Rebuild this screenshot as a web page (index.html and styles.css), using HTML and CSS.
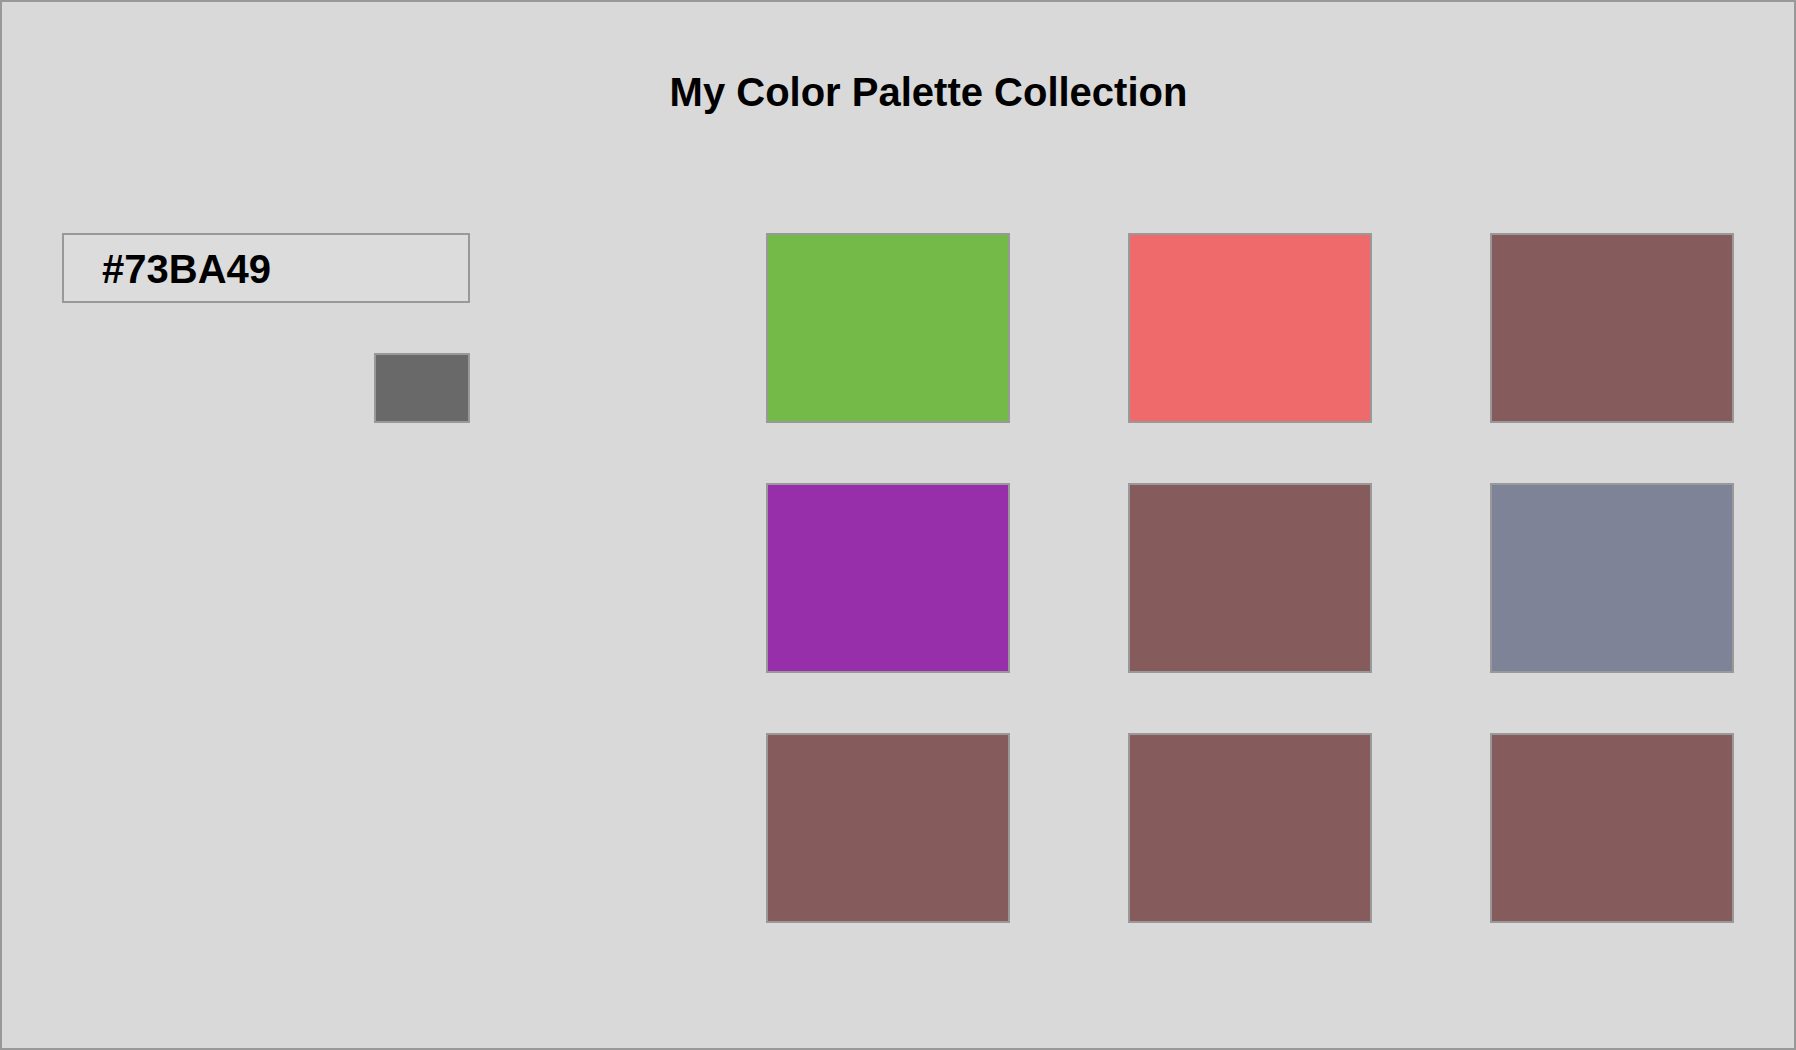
FILE: index.html
```html
<!DOCTYPE html>
<html lang="en">
<head>
    <meta charset="UTF-8">
    <meta name="viewport" content="width=device-width, initial-scale=1.0">
    <title>My Color Palette Collection</title>
    <link rel="stylesheet" href="styles.css">
</head>
<body>
    <div class="app">
        <h1 class="title">My Color Palette Collection</h1>
        <div class="main">
            <div class="picker">
                <input class="hex-input" type="text" value="#73BA49">
                <div class="preview"></div>
            </div>
            <div class="palette">
                <div class="swatch" style="background: #73BA49"></div>
                <div class="swatch" style="background: #EF6A6A"></div>
                <div class="swatch" style="background: #855B5B"></div>
                <div class="swatch" style="background: #982FAA"></div>
                <div class="swatch" style="background: #855B5B"></div>
                <div class="swatch" style="background: #7F8398"></div>
                <div class="swatch" style="background: #855B5B"></div>
                <div class="swatch" style="background: #855B5B"></div>
                <div class="swatch" style="background: #855B5B"></div>
            </div>
        </div>
    </div>
</body>
</html>
```

FILE: styles.css
```css
* {
    box-sizing: border-box;
    margin: 0;
    padding: 0;
    font-family: 'Liberation Sans', Arial, sans-serif;
}

body {
    background: #d9d9d9;
}

.app {
    height: 100vh;
    border: 2px solid #999;
    padding: 0 60px;
}

.title {
    font-size: 40px;
    font-weight: 700;
    line-height: 46px;
    color: #000;
    text-align: center;
    padding: 67px 0 0 61px;
}

.main {
    display: flex;
    justify-content: space-between;
    margin-top: 118px;
}

.picker {
    width: 408px;
    display: flex;
    flex-direction: column;
    align-items: flex-end;
}

.hex-input {
    width: 100%;
    height: 70px;
    border: 2px solid #999;
    background: #dcdcdc;
    padding: 2px 38px 0;
    font-size: 40px;
    font-weight: 700;
    color: #000;
    outline: none;
}

.preview {
    width: 96px;
    height: 70px;
    margin-top: 50px;
    border: 2px solid #999;
    background: #696969;
}

.palette {
    display: grid;
    grid-template-columns: repeat(3, 244px);
    grid-auto-rows: 190px;
    column-gap: 118px;
    row-gap: 60px;
}

.swatch {
    border: 2px solid #999;
}
```
